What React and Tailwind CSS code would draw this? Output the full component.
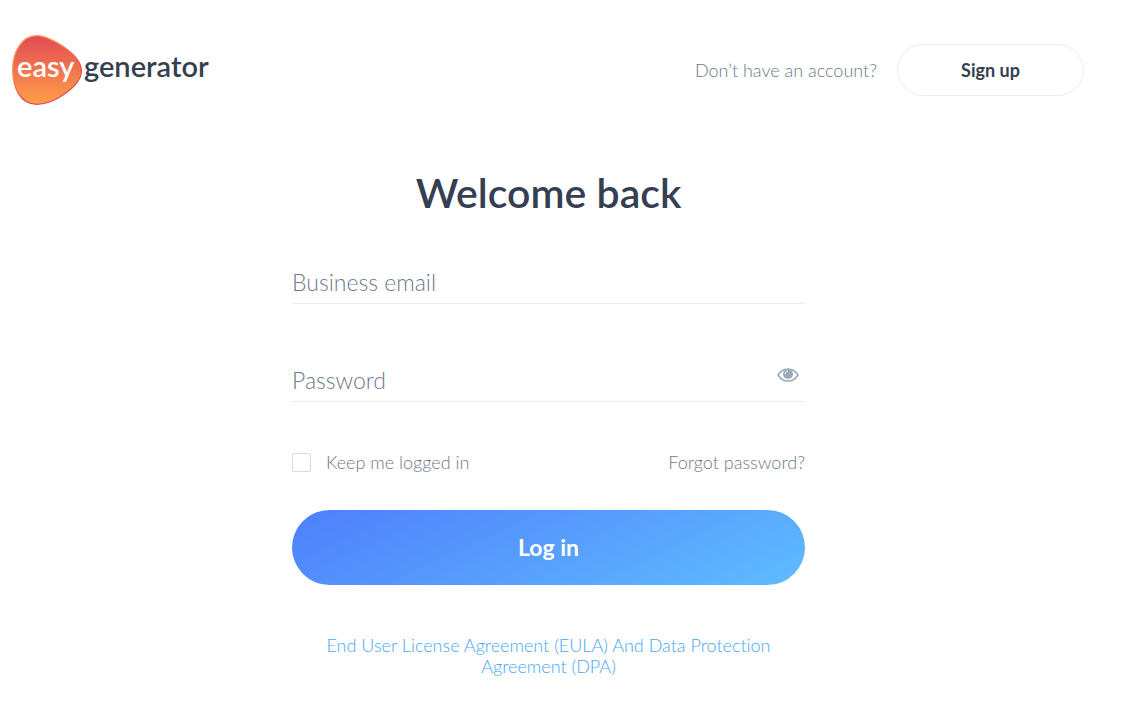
import React, { useState } from 'react';

function Logo() {
  return (
    <svg
      viewBox="0 0 200 70"
      className="h-[70px] w-[200px] font-['Lato',sans-serif] text-[29px]"
      role="img"
      aria-label="easygenerator"
    >
      <defs>
        <linearGradient id="blob" x1="0" y1="0" x2="0" y2="1">
          <stop offset="0" stopColor="#e24a55" />
          <stop offset="1" stopColor="#ff9f47" />
        </linearGradient>
        <linearGradient id="blobEdge" x1="0" y1="0" x2="0.6" y2="1">
          <stop offset="0" stopColor="#fba047" />
          <stop offset="0.45" stopColor="#f68a4b" />
          <stop offset="0.75" stopColor="#e24a55" />
          <stop offset="1" stopColor="#e24a55" />
        </linearGradient>
      </defs>
      <path
        d="M25 .7C38 .7 69.4 19 69.4 36C69.4 51 42 69.3 25 69.3C7 69.3 .7 51 .7 35C.7 19 8 .7 25 .7Z"
        fill="url(#blob)"
        stroke="url(#blobEdge)"
        strokeWidth="1.2"
      />
      <text x="5" y="42" fill="#ffffff" fontWeight="600">easy</text>
      <text x="72" y="42" fill="#343f52" fontWeight="600">generator</text>
    </svg>
  );
}

function EyeIcon() {
  return (
    <svg viewBox="0 0 22 14" className="h-[14px] w-[22px]" aria-hidden="true">
      <path
        d="M1 7C3.4 3 7 .9 11 .9S18.600 3 21 7C18.600 11 15 13.100 11 13.100S3.400 11 1 7Z"
        fill="none"
        stroke="#9aa9ba"
        strokeWidth="1.500"
      />
      <circle cx="11" cy="6" r="5" fill="#9aa9ba" />
      <path d="M8.200 5.600C8.200 4.200 9.200 3.100 10.600 3.100" fill="none" stroke="#ffffff" strokeWidth="1" strokeLinecap="round" />
    </svg>
  );
}

export default function App() {
  const [showPassword, setShowPassword] = useState(false);

  return (
    <div className="min-h-screen bg-white font-['Lato',sans-serif] text-[#6c788c] [font-variant-ligatures:none]">
      <header className="flex items-center justify-between pt-[35px] pl-3 pr-[39px]">
        <a href="#home">
          <Logo />
        </a>
        <div className="flex items-center gap-5 text-lg">
          <span className="font-light">Don’t have an account?</span>
          <button
            type="button"
            className="h-[52px] w-[187px] rounded-full border border-[#ebedf0] font-bold text-[#343f52]"
          >
            Sign up
          </button>
        </div>
      </header>

      <main className="pt-16 pr-[26px]">
        <form
          className="mx-auto flex w-full max-w-[513px] flex-col"
          onSubmit={(e) => e.preventDefault()}
        >
          <h1 className="text-center text-[41px] leading-12 font-semibold text-[#343f52]">
            Welcome back
          </h1>

          <div className="mt-11 border-b border-[#ebeded]">
            <input
              type="email"
              aria-label="Business email"
              placeholder="Business email"
              className="h-[42px] w-full text-[23px] font-light outline-none placeholder:text-[#6c788c]"
            />
          </div>

          <div className="mt-[55px] flex border-b border-[#ebeded]">
            <input
              type={showPassword ? 'text' : 'password'}
              aria-label="Password"
              placeholder="Password"
              className="h-[42px] min-w-0 flex-1 text-[23px] font-light outline-none placeholder:text-[#6c788c]"
            />
            <button
              type="button"
              aria-label="Show password"
              onClick={() => setShowPassword(!showPassword)}
              className="h-8 px-1.5"
            >
              <EyeIcon />
            </button>
          </div>

          <div className="mt-12 flex items-center justify-between text-lg leading-6 font-light">
            <label className="flex items-center gap-[15px]">
              <input
                type="checkbox"
                className="size-[19px] appearance-none rounded-xs border border-[#d3dae0] checked:bg-[#4f80fb]"
              />
              Keep me logged in
            </label>
            <a href="#forgot">Forgot password?</a>
          </div>

          <button
            type="submit"
            className="mt-9 h-[75px] rounded-full bg-linear-[155deg] from-[#4e7ffb] to-[#5fbcff] text-[23px] font-bold text-white"
          >
            Log in
          </button>

          <a
            href="#eula"
            className="mt-[50px] px-8 text-center text-lg leading-[21px] font-light text-[#46a6fa]"
          >
            End User License Agreement (EULA) And Data Protection Agreement (DPA)
          </a>
        </form>
      </main>
    </div>
  );
}
